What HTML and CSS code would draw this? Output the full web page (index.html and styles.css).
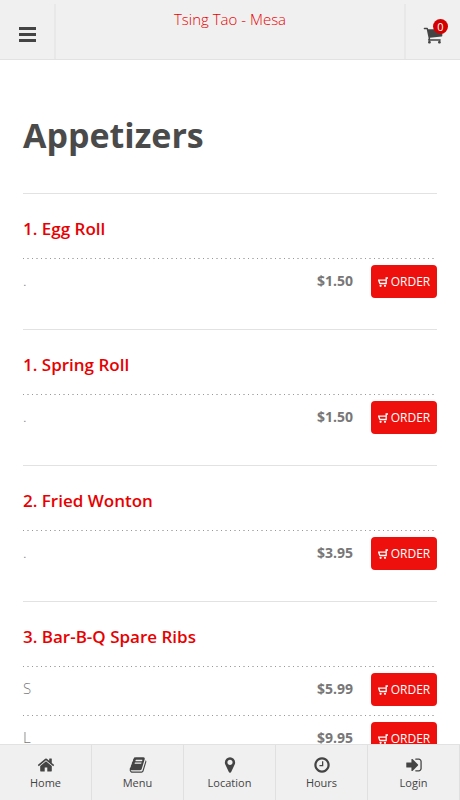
FILE: index.html
```html
<!DOCTYPE html>
<html lang="en">
<head>
    <meta charset="UTF-8">
    <meta name="viewport" content="width=device-width, initial-scale=1.0">
    <title>Tsing Tao - Mesa</title>
    <link rel="stylesheet" href="styles.css">
</head>
<body>
    <!-- Shared cart icon for the order buttons -->
    <svg class="sprite" aria-hidden="true">
        <symbol id="order-cart" viewBox="0 0 10 10">
            <path d="M10 1H8.2V6.5H1.6M8.2 3.2H.7L1.8 6.5" fill="none" stroke="currentColor" stroke-width="1.3"/>
            <circle cx="2.6" cy="8.8" r="1.1"/>
            <circle cx="7" cy="8.8" r="1.1"/>
        </symbol>
    </svg>

    <header>
        <button class="menu-btn" aria-label="Menu">
            <svg viewBox="0 0 17 15"><path d="M0 0h17v3H0zM0 6h17v3H0zM0 12h17v3H0z"/></svg>
        </button>
        <a class="brand" href="#">Tsing Tao - Mesa</a>
        <a class="cart" href="#" aria-label="Cart">
            <svg viewBox="0 0 1792 1792"><path d="M704 1536q0 52-38 90t-90 38-90-38-38-90 38-90 90-38 90 38 38 90zm896 0q0 52-38 90t-90 38-90-38-38-90 38-90 90-38 90 38 38 90zm128-1088v512q0 24-16.5 42.5t-40.5 21.5l-1044 122q13 60 13 70 0 16-24 64h920q26 0 45 19t19 45-19 45-45 19h-1024q-26 0-45-19t-19-45q0-11 8-31.5t16-36 21.5-40 15.5-29.5l-177-823h-204q-26 0-45-19t-19-45 19-45 45-19h256q16 0 28.5 6.5t19.5 15.5 13 24.5 8 26 5.5 29.5 4.5 26h1201q26 0 45 19t19 45z"/></svg>
            <span class="badge">0</span>
        </a>
    </header>

    <main>
        <h1>Appetizers</h1>

        <section class="item">
            <h2>1. Egg Roll</h2>
            <div class="option">
                <span class="size">.</span>
                <span class="price">$1.50</span>
                <button class="order"><svg><use href="#order-cart"/></svg>ORDER</button>
            </div>
        </section>

        <section class="item">
            <h2>1. Spring Roll</h2>
            <div class="option">
                <span class="size">.</span>
                <span class="price">$1.50</span>
                <button class="order"><svg><use href="#order-cart"/></svg>ORDER</button>
            </div>
        </section>

        <section class="item">
            <h2>2. Fried Wonton</h2>
            <div class="option">
                <span class="size">.</span>
                <span class="price">$3.95</span>
                <button class="order"><svg><use href="#order-cart"/></svg>ORDER</button>
            </div>
        </section>

        <section class="item">
            <h2>3. Bar-B-Q Spare Ribs</h2>
            <div class="option">
                <span class="size">S</span>
                <span class="price">$5.99</span>
                <button class="order"><svg><use href="#order-cart"/></svg>ORDER</button>
            </div>
            <div class="option">
                <span class="size">L</span>
                <span class="price">$9.95</span>
                <button class="order"><svg><use href="#order-cart"/></svg>ORDER</button>
            </div>
        </section>
    </main>

    <nav>
        <a href="#">
            <svg viewBox="0 0 1792 1792"><path d="M1472 992v480q0 26-19 45t-45 19h-384v-384h-256v384h-384q-26 0-45-19t-19-45v-480q0-1 .5-3t.5-3l575-474 575 474q1 2 1 6zm223-69l-62 74q-8 9-21 11h-3q-13 0-21-7l-692-577-692 577q-12 8-24 7-13-2-21-11l-62-74q-8-10-7-23.5t11-21.5l719-599q32-26 76-26t76 26l244 204v-195q0-14 9-23t23-9h192q14 0 23 9t9 23v408l219 182q10 8 11 21.5t-7 23.5z"/></svg>
            Home
        </a>
        <a href="#">
            <svg viewBox="0 0 1792 1792"><path d="M1703 478q40 57 18 129l-275 906q-19 64-76.5 107.5t-122.5 43.5h-923q-77 0-148.5-53.5t-99.5-131.5q-24-67-2-127 0-4 3-27t4-37q1-8-3-21.5t-3-19.5q2-11 8-21t16.5-23.5 16.5-23.5q23-38 45-91.5t30-91.5q3-10 .5-30t-.5-28q3-11 17-28t17-23q21-36 42-92t25-90q1-9-2.5-32t.5-28q4-13 22-30.5t22-22.5q19-26 42.5-84.5t27.5-96.5q1-8-3-25.5t-2-26.5q2-8 9-18t18-23 17-21q8-12 16.5-30.5t15-35 16-36 19.5-32 26.5-23.5 36-11.5 47.5 5.5l-1 3q38-9 51-9h761q74 0 114 56t18 130l-274 906q-36 119-71.5 153.5t-128.5 34.5h-869q-27 0-38 15-11 16-1 43 24 70 144 70h923q29 0 56-15.5t35-41.5l300-987q7-22 5-57 38 15 59 43zm-1064 2q-4 13 2 22.5t20 9.5h608q13 0 25.5-9.5t16.5-22.5l21-64q4-13-2-22.5t-20-9.5h-608q-13 0-25.5 9.5t-16.5 22.5zm-83 256q-4 13 2 22.5t20 9.5h608q13 0 25.5-9.5t16.5-22.5l21-64q4-13-2-22.5t-20-9.5h-608q-13 0-25.5 9.5t-16.5 22.5z"/></svg>
            Menu
        </a>
        <a href="#">
            <svg viewBox="0 0 1792 1792"><path d="M1152 640q0-106-75-181t-181-75-181 75-75 181 75 181 181 75 181-75 75-181zm256 0q0 109-33 179l-364 774q-16 33-47.5 52t-67.5 19-67.5-19-46.5-52l-365-774q-33-70-33-179 0-212 150-362t362-150 362 150 150 362z"/></svg>
            Location
        </a>
        <a href="#">
            <svg viewBox="0 0 1792 1792"><path d="M1024 544v448q0 14-9 23t-23 9h-320q-14 0-23-9t-9-23v-64q0-14 9-23t23-9h224v-352q0-14 9-23t23-9h64q14 0 23 9t9 23zm416 352q0-148-73-273t-198-198-273-73-273 73-198 198-73 273 73 273 198 198 273 73 273-73 198-198 73-273zm224 0q0 209-103 385.5t-279.5 279.5-385.5 103-385.5-103-279.5-279.5-103-385.5 103-385.5 279.5-279.5 385.5-103 385.5 103 279.5 279.5 103 385.5z"/></svg>
            Hours
        </a>
        <a href="#">
            <svg viewBox="0 0 1792 1792"><path d="M1312 896q0 26-19 45l-544 544q-19 19-45 19t-45-19-19-45v-288h-448q-26 0-45-19t-19-45v-384q0-26 19-45t45-19h448v-288q0-26 19-45t45-19 45 19l544 544q19 19 19 45zm352-352v704q0 119-84.5 203.5t-203.5 84.5h-320q-13 0-22.5-9.5t-9.5-22.5q0-4-1-20t-.5-26.5 3-23.5 10-19.5 20.5-6.5h320q66 0 113-47t47-113v-704q0-66-47-113t-113-47h-312l-11.5-1-11.5-3-8-5.5-7-9-2-13.5q0-4-1-20t-.5-26.5 3-23.5 10-19.5 20.5-6.5h320q119 0 203.5 84.5t84.5 203.5z"/></svg>
            Login
        </a>
    </nav>
</body>
</html>
```

FILE: styles.css
```css
* {
    margin: 0;
    padding: 0;
    box-sizing: border-box;
}

body {
    font-family: 'Open Sans', sans-serif;
    font-size: 15px;
    color: #777;
    background: #fff;
    padding-bottom: 56px; /* Room for the fixed bottom nav */
}

a {
    color: inherit;
    text-decoration: none;
}

button {
    font-family: inherit;
    border: none;
    cursor: pointer;
}

svg {
    fill: currentColor;
}

.sprite {
    position: absolute;
    width: 0;
    height: 0;
}

header {
    position: sticky;
    top: 0;
    z-index: 10;
    display: flex;
    height: 60px;
    padding-top: 4px;
    background: #f0f0f0;
    border-bottom: 1px solid #e2e2e2;
}

.menu-btn,
.cart {
    display: flex;
    align-items: center;
    justify-content: center;
    width: 56px;
    padding-top: 6px;
    color: #444;
    background: none;
}

.menu-btn {
    border-right: 2px solid #e8e8e8;
}

.menu-btn svg {
    width: 17px;
    height: 15px;
}

.brand {
    flex: 1;
    padding-top: 5px;
    line-height: 20px;
    font-weight: 300;
    text-align: center;
    color: #e80000;
}

.cart {
    position: relative;
    border-left: 2px solid #e8e8e8;
}

.cart svg {
    width: 20px;
    height: 20px;
}

.badge {
    position: absolute;
    top: 15px;
    right: 12px;
    width: 15px;
    height: 15px;
    border-radius: 50%;
    background: #d40000;
    color: #fff;
    font-size: 11px;
    line-height: 15px;
    text-align: center;
}

main {
    padding: 50px 23px 0;
}

h1 {
    margin-bottom: 33px;
    font-size: 34px;
    line-height: 50px;
    font-weight: 700;
    color: #4a4a4a;
}

.item {
    padding-bottom: 22px;
    border-top: 1px solid #e2e2e2;
}

h2 {
    padding: 23px 0 17px;
    font-size: 17px;
    line-height: 24px;
    font-weight: 600;
    color: #e80000;
}

.option {
    display: flex;
    align-items: center;
    padding: 7px 0 9px;
    line-height: 19px;
    /* Widely spaced dots along the top edge, two to a tile */
    background: linear-gradient(90deg, #999 1px, transparent 1px 4px, #bbb 4px 6px, transparent 6px) 0 0 / 9px 1px repeat-x;
}

.size,
.price {
    padding-bottom: 2px;
}

.size {
    flex: 1;
    font-weight: 300;
}

.price {
    margin-right: 18px;
    font-size: 14px;
    font-weight: 700;
}

.order {
    display: flex;
    align-items: center;
    justify-content: center;
    gap: 3px;
    width: 66px;
    height: 33px;
    border-radius: 4px;
    background: #ee100c;
    color: #fff;
    font-size: 12px;
}

.order svg {
    width: 10px;
    height: 10px;
}

nav {
    position: fixed;
    left: 0;
    right: 0;
    bottom: 0;
    z-index: 10;
    display: flex;
    height: 56px;
    background: #f0f0f0;
    border-top: 1px solid #e2e2e2;
}

nav a {
    flex: 1;
    display: flex;
    flex-direction: column;
    align-items: center;
    padding-top: 11px;
    border-right: 1px solid #e0e0e0;
    color: #444;
    font-size: 11px;
    line-height: 18px;
}

nav svg {
    width: 18px;
    height: 18px;
}
```
